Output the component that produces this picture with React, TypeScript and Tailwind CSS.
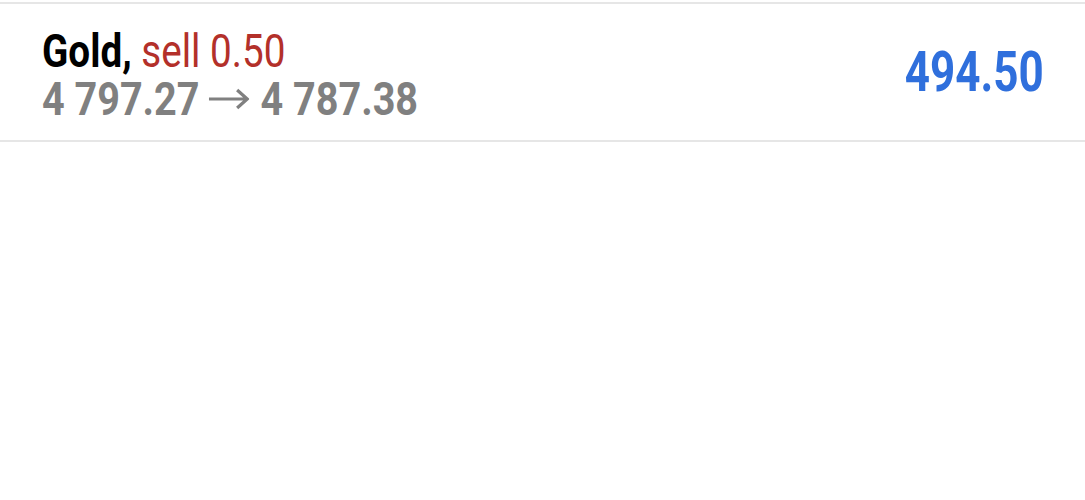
export default function App() {
  return (
    <div className="min-h-[500px] bg-white pt-[2px]" style={{ fontFamily: 'Roboto, "Liberation Sans", sans-serif' }}>
      <div className="flex items-center justify-between border-y-2 border-[#e6e6e6] pl-[42px] pr-[41px] h-[140px]">
        <div className="flex flex-col pt-[7px]">
          <div className="text-[46px] leading-[46px] whitespace-nowrap origin-left scale-x-[0.84]">
            <span className="font-bold text-black">Gold,</span>{' '}
            <span className="text-[#b3302a]">sell 0.50</span>
          </div>
          <div className="flex items-center text-[46px] leading-[50px] font-bold text-[#808080] whitespace-nowrap origin-left scale-x-[0.86]">
            <span>4 797.27</span>
            <svg width="47" height="22" viewBox="0 0 40 22" preserveAspectRatio="none" className="ml-[11px] mr-[13px]" fill="none" stroke="#808080" strokeWidth="3.2">
              <path d="M0 11H38M28 2l10 9-10 9" />
            </svg>
            <span>4 787.38</span>
          </div>
        </div>
        <div className="text-[55px] font-bold text-[#2f6fdc] origin-right scale-x-[0.8]">494.50</div>
      </div>
    </div>
  );
}
